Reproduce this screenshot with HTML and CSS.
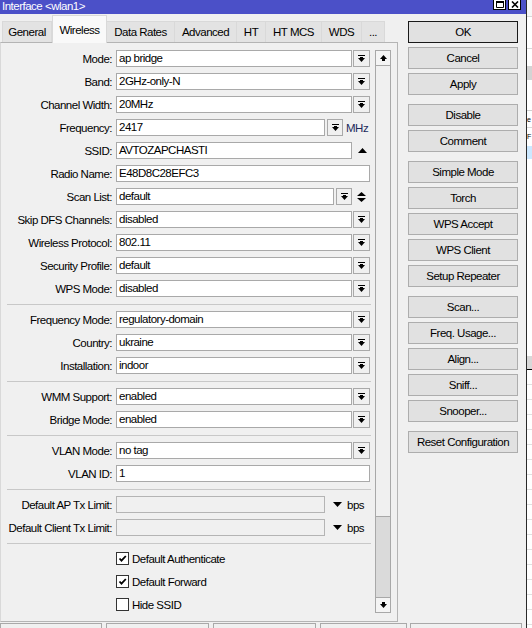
FILE: index.html
```html
<!DOCTYPE html>
<html>
<head>
<meta charset="utf-8">
<link rel="stylesheet" href="styles.css">
</head>
<body>
<div class="window">
  <div class="titlebar">
    <span class="title">Interface &lt;wlan1&gt;</span>
    <span class="tb-btns">
      <span class="tb-btn"><svg width="8" height="7" viewBox="0 0 8 7"><path d="M0.5 0.5h7v6h-7z" fill="none" stroke="#000"/><path d="M0 0h8v2H0z"/></svg></span>
      <span class="tb-btn"><svg width="8" height="7" viewBox="0 0 8 7"><path d="M1 0.5L7 6.5M7 0.5L1 6.5" stroke="#000" stroke-width="1.6"/></svg></span>
    </span>
  </div>
  <div class="content">
    <div class="left">
      <div class="tabs">
        <div class="tab tab-general">General</div>
        <div class="tab tab-active tab-wireless">Wireless</div>
        <div class="tab tab-rates">Data Rates</div>
        <div class="tab tab-adv">Advanced</div>
        <div class="tab tab-ht">HT</div>
        <div class="tab tab-htmcs">HT MCS</div>
        <div class="tab tab-wds">WDS</div>
        <div class="tab tab-more">...</div>
      </div>
      <div class="panel">
        <div class="form">
          <div class="row"><span class="label">Mode:</span><span class="input">ap bridge</span><span class="dd"><svg width="7" height="7" viewBox="0 0 7 7"><path d="M0 0h7v1H0zM2 2h3v1H2zM0 3h7L3.5 7z"/></svg></span></div>
          <div class="row"><span class="label">Band:</span><span class="input">2GHz-only-N</span><span class="dd"><svg width="7" height="7" viewBox="0 0 7 7"><path d="M0 0h7v1H0zM2 2h3v1H2zM0 3h7L3.5 7z"/></svg></span></div>
          <div class="row"><span class="label">Channel Width:</span><span class="input">20MHz</span><span class="dd"><svg width="7" height="7" viewBox="0 0 7 7"><path d="M0 0h7v1H0zM2 2h3v1H2zM0 3h7L3.5 7z"/></svg></span></div>
          <div class="row"><span class="label">Frequency:</span><span class="input input-short">2417</span><span class="dd dd-near"><svg width="7" height="7" viewBox="0 0 7 7"><path d="M0 0h7v1H0zM2 2h3v1H2zM0 3h7L3.5 7z"/></svg></span><span class="unit unit-mhz">MHz</span></div>
          <div class="row"><span class="label">SSID:</span><span class="input">AVTOZAPCHASTI</span><span class="side-ico ico-up"><svg width="9" height="5" viewBox="0 0 9 5"><path d="M4.5 0L9 5H0z"/></svg></span></div>
          <div class="row"><span class="label">Radio Name:</span><span class="input input-full">E48D8C28EFC3</span></div>
          <div class="row"><span class="label">Scan List:</span><span class="input input-scan">default</span><span class="dd dd-near"><svg width="7" height="7" viewBox="0 0 7 7"><path d="M0 0h7v1H0zM2 2h3v1H2zM0 3h7L3.5 7z"/></svg></span><span class="side-ico ico-updown"><svg width="9" height="10" viewBox="0 0 9 10"><path d="M4.5 0L9 4H0zM0 6h9L4.5 10z"/></svg></span></div>
          <div class="row"><span class="label">Skip DFS Channels:</span><span class="input">disabled</span><span class="dd"><svg width="7" height="7" viewBox="0 0 7 7"><path d="M0 0h7v1H0zM2 2h3v1H2zM0 3h7L3.5 7z"/></svg></span></div>
          <div class="row"><span class="label">Wireless Protocol:</span><span class="input">802.11</span><span class="dd"><svg width="7" height="7" viewBox="0 0 7 7"><path d="M0 0h7v1H0zM2 2h3v1H2zM0 3h7L3.5 7z"/></svg></span></div>
          <div class="row"><span class="label">Security Profile:</span><span class="input">default</span><span class="dd"><svg width="7" height="7" viewBox="0 0 7 7"><path d="M0 0h7v1H0zM2 2h3v1H2zM0 3h7L3.5 7z"/></svg></span></div>
          <div class="row"><span class="label">WPS Mode:</span><span class="input">disabled</span><span class="dd"><svg width="7" height="7" viewBox="0 0 7 7"><path d="M0 0h7v1H0zM2 2h3v1H2zM0 3h7L3.5 7z"/></svg></span></div>
          <div class="sep"></div>
          <div class="row"><span class="label">Frequency Mode:</span><span class="input">regulatory-domain</span><span class="dd"><svg width="7" height="7" viewBox="0 0 7 7"><path d="M0 0h7v1H0zM2 2h3v1H2zM0 3h7L3.5 7z"/></svg></span></div>
          <div class="row"><span class="label">Country:</span><span class="input">ukraine</span><span class="dd"><svg width="7" height="7" viewBox="0 0 7 7"><path d="M0 0h7v1H0zM2 2h3v1H2zM0 3h7L3.5 7z"/></svg></span></div>
          <div class="row"><span class="label">Installation:</span><span class="input">indoor</span><span class="dd"><svg width="7" height="7" viewBox="0 0 7 7"><path d="M0 0h7v1H0zM2 2h3v1H2zM0 3h7L3.5 7z"/></svg></span></div>
          <div class="sep"></div>
          <div class="row"><span class="label">WMM Support:</span><span class="input">enabled</span><span class="dd"><svg width="7" height="7" viewBox="0 0 7 7"><path d="M0 0h7v1H0zM2 2h3v1H2zM0 3h7L3.5 7z"/></svg></span></div>
          <div class="row"><span class="label">Bridge Mode:</span><span class="input">enabled</span><span class="dd"><svg width="7" height="7" viewBox="0 0 7 7"><path d="M0 0h7v1H0zM2 2h3v1H2zM0 3h7L3.5 7z"/></svg></span></div>
          <div class="sep"></div>
          <div class="row"><span class="label">VLAN Mode:</span><span class="input">no tag</span><span class="dd"><svg width="7" height="7" viewBox="0 0 7 7"><path d="M0 0h7v1H0zM2 2h3v1H2zM0 3h7L3.5 7z"/></svg></span></div>
          <div class="row"><span class="label">VLAN ID:</span><span class="input input-full">1</span></div>
          <div class="sep"></div>
          <div class="row"><span class="label">Default AP Tx Limit:</span><span class="input input-short input-disabled"></span><span class="side-ico ico-down"><svg width="9" height="5" viewBox="0 0 9 5"><path d="M0 0h9L4.5 5z"/></svg></span><span class="unit unit-bps">bps</span></div>
          <div class="row"><span class="label">Default Client Tx Limit:</span><span class="input input-short input-disabled"></span><span class="side-ico ico-down"><svg width="9" height="5" viewBox="0 0 9 5"><path d="M0 0h9L4.5 5z"/></svg></span><span class="unit unit-bps">bps</span></div>
          <div class="sep"></div>
          <div class="checks">
            <div class="row check-row"><span class="checkbox"><svg width="11" height="11" viewBox="0 0 11 11"><path d="M2.5 5.5l2 2.2L8.8 3" fill="none" stroke="#000" stroke-width="1.8"/></svg></span><span class="check-label">Default Authenticate</span></div>
            <div class="row check-row"><span class="checkbox"><svg width="11" height="11" viewBox="0 0 11 11"><path d="M2.5 5.5l2 2.2L8.8 3" fill="none" stroke="#000" stroke-width="1.8"/></svg></span><span class="check-label">Default Forward</span></div>
            <div class="row check-row"><span class="checkbox"></span><span class="check-label">Hide SSID</span></div>
          </div>
        </div>
        <div class="scrollbar">
          <div class="sb-btn sb-up"><svg width="7" height="6" viewBox="0 0 7 6"><path d="M3.5 0L7 4H5v2H2V4H0z"/></svg></div>
          <div class="sb-track"></div>
          <div class="sb-thumb"></div>
          <div class="sb-btn sb-down"><svg width="7" height="6" viewBox="0 0 7 6"><path d="M2 0h3v2h2L3.5 6L0 2h2z"/></svg></div>
        </div>
      </div>
    </div>
    <div class="buttons">
      <div class="group">
        <div class="btn btn-default">OK</div>
        <div class="btn">Cancel</div>
        <div class="btn">Apply</div>
      </div>
      <div class="group">
        <div class="btn">Disable</div>
        <div class="btn">Comment</div>
      </div>
      <div class="group">
        <div class="btn">Simple Mode</div>
        <div class="btn">Torch</div>
        <div class="btn">WPS Accept</div>
        <div class="btn">WPS Client</div>
        <div class="btn">Setup Repeater</div>
      </div>
      <div class="group">
        <div class="btn">Scan...</div>
        <div class="btn">Freq. Usage...</div>
        <div class="btn">Align...</div>
        <div class="btn">Sniff...</div>
        <div class="btn">Snooper...</div>
      </div>
      <div class="group">
        <div class="btn">Reset Configuration</div>
      </div>
    </div>
  </div>
  <div class="status">
    <div class="seg seg-1"></div>
    <div class="seg seg-2"></div>
    <div class="seg seg-3"></div>
    <div class="seg seg-4"></div>
    <div class="seg seg-5"></div>
  </div>
</div>
<div class="other">
  <div class="o-a"></div>
  <div class="o-b"></div>
  <div class="o-c"></div>
  <div class="o-grey"></div>
  <div class="o-d"></div>
  <div class="o-text">e</div>
  <div class="o-text o-text2">F</div>
  <div class="o-sel"></div>
  <div class="o-e"></div>
  <div class="o-grey2"></div>
  <div class="o-list"></div>
</div>
</body>
</html>
```
FILE: styles.css
```css
* { box-sizing: border-box; }
html, body { margin: 0; padding: 0; }
body {
  width: 532px;
  height: 628px;
  overflow: hidden;
  display: flex;
  background: #fff;
  font-family: "Liberation Sans", Arial, sans-serif;
  font-size: 11.5px;
  letter-spacing: -0.5px;
  color: #000;
}
.window {
  width: 527px;
  height: 628px;
  flex: none;
  border-right: 1px solid #2a2a2a;
  background: #f0f0f0;
  display: flex;
  flex-direction: column;
}
.titlebar {
  height: 14px;
  flex: none;
  background: #4b50c8;
  color: #fff;
  display: flex;
  justify-content: space-between;
  align-items: flex-start;
  padding: 0 5px 0 2px;
}
.title { line-height: 13px; }
.tb-btns { display: flex; gap: 2px; }
.tb-btn {
  width: 13px;
  height: 11px;
  margin-top: -1px;
  border: 1px solid #000;
  background: #fff;
  display: flex;
  align-items: center;
  justify-content: center;
}
.content { height: 608px; flex: none; display: flex; }
.left { width: 398px; display: flex; flex-direction: column; }
.tabs {
  height: 28px;
  display: flex;
  align-items: flex-end;
  padding-left: 2px;
}
.tab {
  height: 21px;
  border: 1px solid #d9d9d9;
  border-bottom: none;
  border-left: none;
  background: #e3e3e3;
  text-align: center;
  line-height: 21px;
}
.tab-general { width: 50px; border-left: 1px solid #d9d9d9; }
.tab-wireless { width: 55px; }
.tab-rates { width: 68px; }
.tab-adv { width: 62px; }
.tab-ht { width: 29px; }
.tab-htmcs { width: 56px; }
.tab-wds { width: 40px; }
.tab-more { width: 23px; }
.tab-active {
  height: 28px;
  margin-bottom: -1px;
  background: #f9f9f9;
  border: 1px solid #d9d9d9;
  border-bottom: none;
  line-height: 20px;
  padding-top: 4px;
  position: relative;
  z-index: 1;
}
.panel {
  height: 580px;
  border: 1px solid #b4b4b4;
  border-left: 1px solid #d9d9d9;
  display: flex;
  padding-top: 7px;
}
.form {
  width: 374px;
  display: flex;
  flex-direction: column;
  gap: 6px;
}
.row {
  height: 17px;
  display: flex;
  align-items: center;
}
.label {
  width: 115px;
  padding-right: 4px;
  text-align: right;
  white-space: nowrap;
}
.input {
  width: 236px;
  height: 17px;
  border: 1px solid #a9a9a9;
  background: #fff;
  padding-left: 2px;
  line-height: 15px;
  white-space: nowrap;
}
.input-full { width: 254px; }
.input-short { width: 209px; }
.input-scan { width: 218px; }
.input-disabled { background: #f0f0f0; border-color: #b4b4b4; }
.dd {
  width: 17px;
  height: 17px;
  margin-left: 1px;
  border: 1px solid #a9a9a9;
  background: #f0f0f0;
  display: flex;
  align-items: center;
  justify-content: center;
}
.dd-near { margin-left: 2px; width: 16px; }
.unit { white-space: nowrap; }
.unit-mhz { margin-left: 3px; color: #1d2a5c; }
.unit-bps { margin-left: 5px; }
.side-ico { display: flex; align-items: center; }
.ico-up { margin-left: 6px; }
.ico-updown { margin-left: 5px; }
.ico-down { margin-left: 8px; }
.sep {
  margin: 1px 0 0 6px;
  width: 364px;
  height: 1px;
  background: #c8c8c8;
}
.checks {
  display: flex;
  flex-direction: column;
  gap: 6px;
}
.check-row { padding-left: 115px; }
.checkbox {
  width: 13px;
  height: 13px;
  border: 1px solid #333;
  background: #fff;
  display: flex;
  align-items: center;
  justify-content: center;
}
.check-label { margin-left: 3px; }
.scrollbar {
  width: 16px;
  height: 563px;
  border: 1px solid #a8a8a8;
  background: #f0f0f0;
  display: flex;
  flex-direction: column;
}
.sb-btn {
  height: 15px;
  flex: none;
  background: #f4f4f4;
  display: flex;
  align-items: center;
  justify-content: center;
}
.sb-up { border-bottom: 1px solid #a8a8a8; }
.sb-down { border-top: 1px solid #a8a8a8; }
.sb-track { flex: 1; }
.sb-thumb {
  height: 81px;
  flex: none;
  background: #dadada;
  border-top: 1px solid #a8a8a8;
}
.buttons {
  width: 110px;
  margin-left: 10px;
  padding-top: 7px;
  display: flex;
  flex-direction: column;
  gap: 9px;
}
.group { display: flex; flex-direction: column; gap: 4px; }
.btn {
  height: 22px;
  border: 1px solid #adadad;
  background: #e1e1e1;
  text-align: center;
  line-height: 20px;
  white-space: nowrap;
}
.btn-default { border-color: #1a1a1a; }
.status {
  height: 6px;
  display: flex;
  align-items: flex-start;
  padding-top: 1px;
}
.seg {
  height: 10px;
  border: 1px solid #a9a9a9;
  background: #f0f0f0;
  flex: none;
}
.seg-1 { width: 102px; }
.seg-2 { width: 103px; margin-left: 4px; }
.seg-3 { width: 103px; margin-left: 4px; }
.seg-4 { width: 87px; margin-left: 4px; }
.seg-5 { width: 112px; margin-left: 3px; }
.other {
  width: 5px;
  flex: none;
  display: flex;
  flex-direction: column;
  background: #fff;
  overflow: hidden;
}
.o-a { height: 17px; background: #f7f7f7; border-bottom: 1px solid #d8d8d8; }
.o-b { height: 32px; border-bottom: 1px solid #d8d8d8; }
.o-c { height: 17px; }
.o-grey { height: 14px; background: #d4d4d4; }
.o-d { height: 31px; border-bottom: 1px solid #d0d0d0; }
.o-text {
  height: 17px;
  line-height: 17px;
  font-size: 7px;
  letter-spacing: 0;
  border-bottom: 1px solid #d8d8d8;
}
.o-text2 { height: 18px; border-bottom: none; }
.o-sel { height: 13px; background: #cce8ff; }
.o-e { height: 197px; }
.o-grey2 { height: 14px; background: #d8d8d8; border-bottom: 1px solid #000; }
.o-list {
  flex: 1;
  background: repeating-linear-gradient(#fff 0, #fff 14px, #e0e0e0 14px, #e0e0e0 15px);
}
```
